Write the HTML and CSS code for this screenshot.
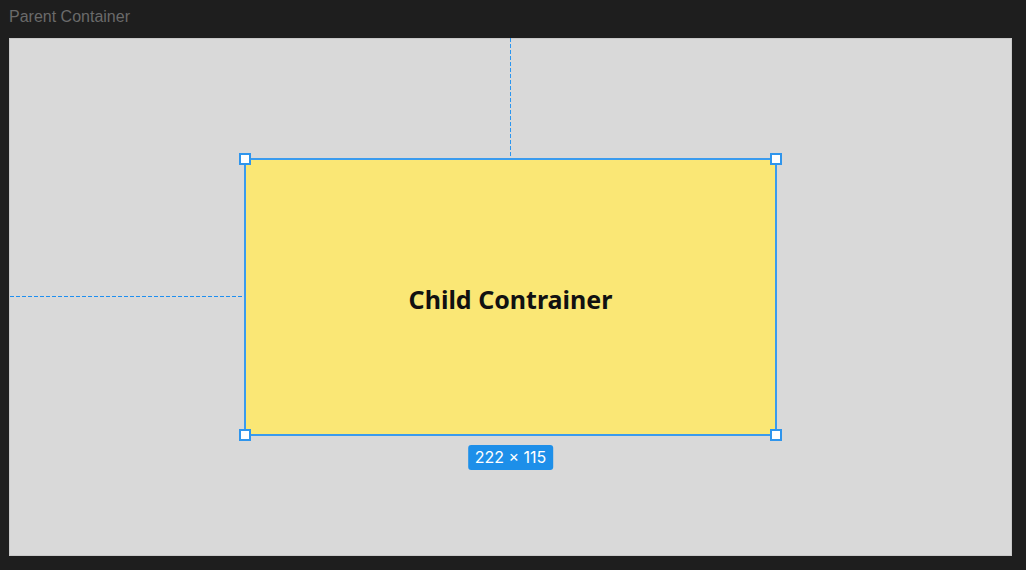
FILE: index.html
```html
<!DOCTYPE html>
<html>
<head>
<meta charset="utf-8">
<link rel="stylesheet" href="styles.css">
</head>
<body>
<div class="app">
  <div class="title">Parent Container</div>
  <div class="parent">
    <div class="guide-v"></div>
    <div class="child">
      <div class="guide-h"></div>
      <span class="label">Child Contrainer</span>
      <span class="handle tl"></span>
      <span class="handle tr"></span>
      <span class="handle bl"></span>
      <span class="handle br"></span>
      <span class="size">222 × 115</span>
    </div>
  </div>
</div>
</body>
</html>
```
FILE: styles.css
```css
html, body {
  margin: 0;
  padding: 0;
  background: #1e1e1e;
}
.app {
  width: 1026px;
  height: 570px;
  display: flex;
  flex-direction: column;
  padding: 0 14px 14px 9px;
  box-sizing: border-box;
}
.title {
  height: 38px;
  line-height: 33px;
  color: #6a6a6a;
  font-family: "Liberation Sans", Arial, sans-serif;
  font-size: 16px;
}
.parent {
  flex: 1;
  position: relative;
  background: #d9d9d9;
  box-shadow: inset 0 0 0 1px #c9c9c9;
  display: flex;
  align-items: center;
  justify-content: center;
}
.guide-v {
  position: absolute;
  left: 501px;
  top: 0;
  width: 1px;
  height: 120px;
  background: repeating-linear-gradient(to bottom, #2a95ef 0 4px, transparent 4px 6px);
}
.child {
  position: relative;
  width: 533px;
  height: 278px;
  box-sizing: border-box;
  background: #fae775;
  border: 2px solid #3a9bee;
  display: flex;
  align-items: center;
  justify-content: center;
}
.guide-h {
  position: absolute;
  right: calc(100% + 2px);
  top: 136px;
  width: 234px;
  height: 1px;
  background: repeating-linear-gradient(to right, #1f8ff0 0 4px, transparent 4px 6px);
}
.label {
  font-family: "Noto Sans", "Open Sans", sans-serif;
  font-weight: 700;
  font-size: 25px;
  color: #111;
  margin-top: 3px;
}
.handle {
  position: absolute;
  width: 12px;
  height: 12px;
  box-sizing: border-box;
  background: #fff;
  border: 2px solid #2f95ec;
}
.tl { left: -7px; top: -7px; }
.tr { right: -7px; top: -7px; }
.bl { left: -7px; bottom: -7px; }
.br { right: -7px; bottom: -7px; }
.size {
  position: absolute;
  top: calc(100% + 11px);
  left: 50%;
  transform: translateX(-50%);
  background: #1d8fe9;
  color: #fff;
  font-family: "Inter", "Liberation Sans", sans-serif;
  font-size: 16px;
  line-height: 25px;
  padding: 0 7px;
  border-radius: 3px;
  white-space: nowrap;
}
```
